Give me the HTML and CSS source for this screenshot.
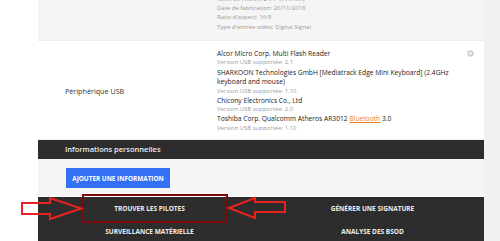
FILE: index.html
```html
<!DOCTYPE html>
<html lang="fr">
<head>
  <meta charset="UTF-8">
  <meta name="viewport" content="width=device-width, initial-scale=1.0">
  <title>Configuration</title>
  <link rel="stylesheet" href="styles.css">
</head>
<body>
  <div class="page">
    <div class="gutter"></div>
    <main class="config">
      <div class="spec-row spec-row--grey">
        <div class="spec-label"></div>
        <div class="spec-values">
          <p class="sub">Taille de l'écran: 24.4" (61.9 cm)</p>
          <p class="sub">Date de fabrication: 20/11/2018</p>
          <p class="sub">Ratio d'aspect: 16:9</p>
          <p class="sub">Type d'entrée vidéo: Digital Signal</p>
        </div>
      </div>

      <div class="spec-row">
        <div class="spec-label">Périphérique USB</div>
        <div class="spec-values">
          <p class="main">Alcor Micro Corp. Multi Flash Reader</p>
          <p class="sub">Version USB supportée: 2.1</p>
          <p class="main">SHARKOON Technologies GmbH [Mediatrack Edge Mini Keyboard] (2.4GHz keyboard and mouse)</p>
          <p class="sub">Version USB supportée: 1.10</p>
          <p class="main">Chicony Electronics Co., Ltd</p>
          <p class="sub">Version USB supportée: 2.0</p>
          <p class="main">Toshiba Corp. Qualcomm Atheros AR3012 <a href="#" class="link">Bluetooth</a> 3.0</p>
          <p class="sub">Version USB supportée: 1.10</p>
        </div>
        <svg class="row-icon" width="7" height="7" viewBox="0 0 10 10">
          <circle cx="5" cy="5" r="4.5" fill="#cfcfcf"/>
          <circle cx="5" cy="5" r="2" fill="#f4f4f4"/>
        </svg>
      </div>

      <h3 class="section-title">Informations personnelles</h3>
      <div class="section-body">
        <button class="add-button">AJOUTER UNE INFORMATION</button>
      </div>

      <nav class="actions">
        <a href="#" class="action">TROUVER LES PILOTES</a>
        <a href="#" class="action">GÉNÉRER UNE SIGNATURE</a>
        <a href="#" class="action">SURVEILLANCE MATÉRIELLE</a>
        <a href="#" class="action">ANALYSE DES BSOD</a>
        <svg class="annotation" width="300" height="45" viewBox="0 0 300 45">
          <rect x="83" y="10" width="144" height="27" fill="none" stroke="#7d0b0b" stroke-width="2"/>
          <polygon points="22,18 50,18 50,13 81,23.5 50,34 50,29 22,29" fill="none" stroke="#e8221f" stroke-width="2"/>
          <polygon points="229,23 255,13 255,17 285,17 285,27 255,27 255,33" fill="none" stroke="#e8221f" stroke-width="2"/>
        </svg>
      </nav>
    </main>
    <div class="sidebar"></div>
  </div>
</body>
</html>
```

FILE: styles.css
```css
body {
  margin: 0;
  font-family: "Open Sans", Arial, sans-serif;
  background: #fff;
  color: #333;
  overflow: hidden;
}
.page {
  display: flex;
  height: 241px;
}
.gutter {
  width: 38px;
  flex: none;
}
.sidebar {
  width: 16px;
  flex: none;
  background: #f1f1f1;
}
.config {
  width: 446px;
  flex: none;
  margin-top: -5px;
}
.spec-row {
  position: relative;
  display: flex;
  align-items: center;
  background: #fff;
  border-top: 1px solid #ededed;
  border-bottom: 1px solid #ededed;
  padding: 8px 0 6px;
}
.spec-row--grey {
  background: #f5f5f5;
  border: none;
  padding: 0 0 8px;
}
.spec-label {
  width: 152px;
  padding-left: 27px;
  font-size: 7.2px;
}
.spec-values {
  width: 245px;
}
.spec-values p {
  margin: 0;
}
.main {
  font-size: 6.7px;
  line-height: 9.5px;
  color: #222;
}
.sub {
  font-size: 6px;
  line-height: 9.2px;
  color: #9a9a9a;
}
.link {
  color: #e5812e;
}
.row-icon {
  position: absolute;
  top: 9px;
  right: 10px;
}
.section-title {
  margin: 0;
  height: 19px;
  line-height: 19px;
  background: #2d2d2d;
  color: #eee;
  font-size: 7.5px;
  font-weight: 600;
  padding-left: 27px;
}
.section-body {
  background: #f5f5f5;
  padding: 9px 28px 8px;
  border-bottom: 1px solid #fff;
}
.add-button {
  display: block;
  height: 20px;
  width: 104px;
  padding: 0;
  border: none;
  background: #3470f3;
  color: #fff;
  font-family: inherit;
  font-size: 6.4px;
  font-weight: 700;
  cursor: pointer;
}
.actions {
  position: relative;
  display: grid;
  grid-template-columns: 1fr 1fr;
  background: #2d2d2d;
  padding-bottom: 10px;
}
.action {
  height: 23px;
  line-height: 23px;
  text-align: center;
  color: #eee;
  font-size: 6.5px;
  font-weight: 700;
  text-decoration: none;
}
.annotation {
  position: absolute;
  left: -38px;
  top: -12px;
}
```
